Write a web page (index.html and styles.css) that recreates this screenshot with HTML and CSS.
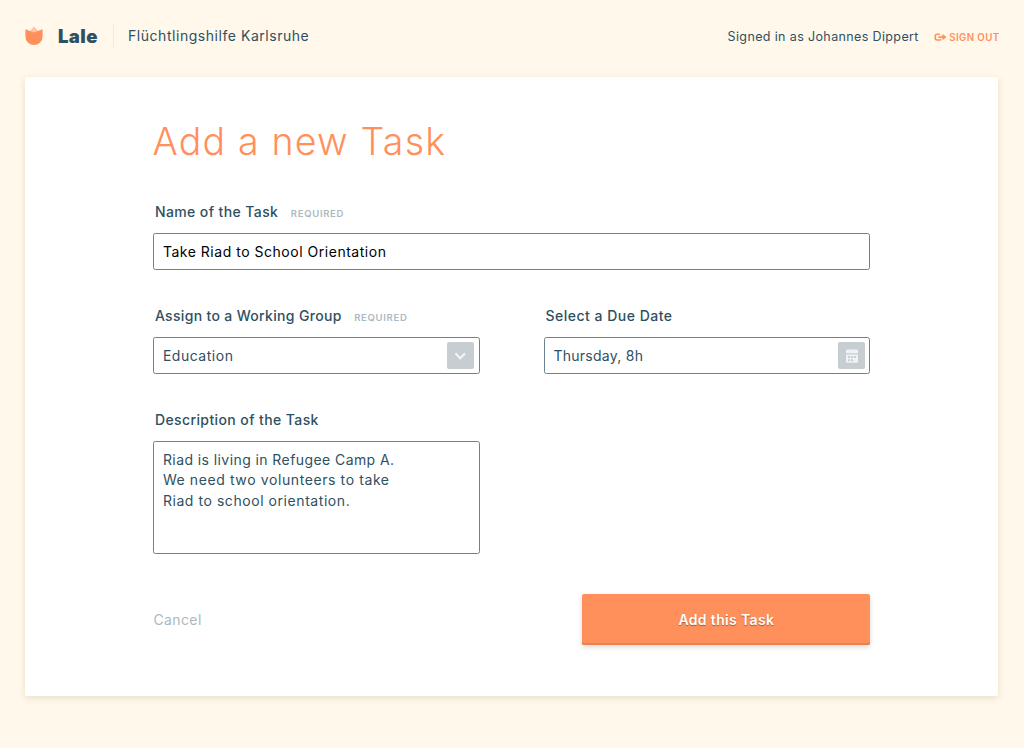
FILE: index.html
```html
<!DOCTYPE html>
<html lang="en">
<head>
<meta charset="utf-8">
<title>Lale – Add a new Task</title>
<link rel="stylesheet" href="styles.css">
</head>
<body>
<header class="header">
  <svg class="logo" viewBox="0 0 18 20" width="18" height="20"><path class="logo-back" d="M9 0.5 14 6 9 9 4 6Z"/><path class="logo-front" d="M0.4 3.2 9 6.6 17.6 3.2V10.5a8.6 8.6 0 0 1-17.2 0Z"/></svg>
  <span class="brand">Lale</span>
  <span class="org">Flüchtlingshilfe Karlsruhe</span>
  <span class="user">Signed in as Johannes Dippert</span>
  <a class="signout"><svg class="exit" viewBox="0 0 13 9" width="13" height="9"><path class="exit-box" d="M5.8 1.2H3Q1.3 1.2 1.3 2.9V5.3Q1.3 7 3 7H5.8Q6.8 7 7 6.2"/><path class="exit-arrow" d="M4.4 3.2H8.4V1L12.6 4.1 8.4 7.2V5H4.4Z"/></svg><span>SIGN OUT</span></a>
</header>
<main class="card">
  <h1 class="title">Add a new Task</h1>
  <form class="form">
    <section class="field wide">
      <div class="label"><span>Name of the Task</span><span class="required">REQUIRED</span></div>
      <div class="input typed"><span class="t-name">Take Riad to School Orientation</span></div>
    </section>
    <section class="field">
      <div class="label"><span class="t-group">Assign to a Working Group</span><span class="required">REQUIRED</span></div>
      <div class="input"><span class="t-name">Education</span><span class="tool"><svg viewBox="0 0 27 27" width="27" height="27"><path class="chevron" d="M8.4 11.4 13.2 16.2 18 11.4"/></svg></span></div>
    </section>
    <section class="field">
      <div class="label"><span class="t-due">Select a Due Date</span></div>
      <div class="input"><span class="t-date">Thursday, 8h</span><span class="tool"><svg viewBox="0 0 27 27" width="27" height="27"><path class="calendar" d="M8 8.6Q8 7.4 9.2 7.4H18.8Q20 7.4 20 8.6V11.2H8ZM8 12.4H20V19.6Q20 20.8 18.8 20.8H9.2Q8 20.8 8 19.6Z"/><path class="dots" d="M10 14h2v2h-2zM13 14h2v2h-2zM16 14h2v2h-2zM10 17.2h2v2h-2zM13 17.2h2v2h-2z"/></svg></span></div>
    </section>
    <section class="field">
      <div class="label"><span>Description of the Task</span></div>
      <div class="input area"><span class="t-first">Riad is living in Refugee Camp A.</span><br><span class="t-second">We need two volunteers to take</span><br><span class="t-third">Riad to school orientation.</span></div>
    </section>
  </form>
  <footer class="actions"><a class="cancel">Cancel</a><button class="submit" type="button">Add this Task</button></footer>
</main>
</body>
</html>
```
FILE: styles.css
```css
* { box-sizing: border-box; }
body { margin: 0; height: 748px; background: #fff8eb; color: #2f5061; font: 14px/20px Inter, "Liberation Sans", sans-serif; overflow: hidden; }
.header { height: 77px; padding: 0 24.5px 0 25px; display: flex; align-items: flex-start; }
.logo { margin-top: 25.5px; }
.logo-back { fill: #ffc5a3; }
.logo-front { fill: #ff905b; }
.brand { margin: 25.5px 0 0 15px; width: 55px; font-size: 18.5px; font-weight: 900; letter-spacing: .4px; white-space: nowrap; }
.org { margin-top: 24px; height: 24px; padding: 2px 0 0 14px; border-left: 1px solid #f4ebdf; letter-spacing: .54px; white-space: nowrap; }
.user { margin: 27px 0 0 auto; font-size: 12.5px; letter-spacing: .37px; white-space: nowrap; }
.signout { margin: 28px 0 0 15px; display: flex; align-items: center; gap: 2.5px; color: #ff905b; font-size: 9.7px; font-weight: 600; letter-spacing: .4px; white-space: nowrap; }
.exit { margin-top: -1px; }
.exit-box { fill: none; stroke: #ff905b; stroke-width: 1.6; }
.exit-arrow { fill: #ff905b; }
.card { width: 973px; height: 619px; margin-left: 25.4px; padding: 40px 128px 0; background: #fff; border-radius: 2px; box-shadow: 0 2px 7px rgba(120, 90, 40, .16); }
.title { margin: 0 0 0 -1px; height: 85px; font-size: 37.5px; line-height: 50px; font-weight: 300; letter-spacing: 1.2px; color: #ff905b; white-space: nowrap; }
.form { display: grid; grid-template-columns: 326.5px 326.5px; column-gap: 64px; row-gap: 36px; }
.wide { grid-column: 1 / 3; }
.label { height: 31px; padding-left: 1.5px; display: flex; gap: 12.5px; font-weight: 500; letter-spacing: .4px; white-space: nowrap; }
.t-group { letter-spacing: .33px; }
.t-due { letter-spacing: .5px; }
.required { padding-top: 2px; font-size: 9.5px; font-weight: 600; letter-spacing: .7px; color: #acb9c0; }
.input { height: 37px; padding: 8px 4.5px 0 8.5px; display: flex; justify-content: space-between; border: 1px solid #6b8390; border-radius: 2.5px; letter-spacing: .52px; white-space: nowrap; }
.typed { color: #000; }
.t-date { letter-spacing: .27px; }
.t-first { letter-spacing: .42px; }
.t-second { letter-spacing: .6px; }
.t-third { letter-spacing: .56px; }
.area { display: block; height: 113px; line-height: 20.4px; }
.tool { width: 27px; height: 27px; margin-top: -4px; background: #c6ced2; border-radius: 2px; }
.tool svg { display: block; }
.chevron { fill: none; stroke: #f1f3f4; stroke-width: 2.2; }
.calendar { fill: #eff2f3; }
.dots { fill: #c6ced2; }
.actions { margin-top: 40px; display: flex; justify-content: space-between; }
.cancel { margin-top: 16px; letter-spacing: .4px; color: #acb9c0; }
.submit { width: 288px; height: 51px; padding: 1px 0 0; border: 0; border-radius: 2px; background: #ff905b; color: #fff; font: 600 14px/20px Inter, "Liberation Sans", sans-serif; letter-spacing: .35px; text-shadow: 0 1px 1px rgba(120, 50, 20, .6); box-shadow: inset 0 -2px 0 #e8804f, 0 2px 5px rgba(0, 0, 0, .16); }
```
